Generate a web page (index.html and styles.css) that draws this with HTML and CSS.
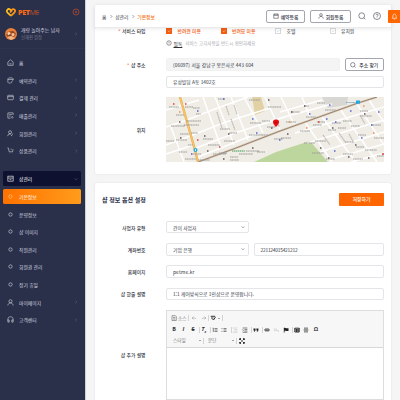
FILE: index.html
```
<!DOCTYPE html>
<html lang="ko">
<head>
<meta charset="utf-8">
<title>PETME 기본정보</title>
<link rel="stylesheet" href="styles.css">
</head>
<body>
<svg class="defs" width="0" height="0">
  <symbol id="right" viewBox="0 0 6 6"><path d="M2.2 1l2 2-2 2"/></symbol>
  <symbol id="down" viewBox="0 0 6 6"><path d="M1 2.2l2 2 2-2"/></symbol>
  <symbol id="dot" viewBox="0 0 8 8"><circle cx="4" cy="4" r="1.9"/></symbol>
  <symbol id="person" viewBox="0 0 8 8"><circle cx="4" cy="2.6" r="1.8"/><path d="M1 7.4c.2-3.8 5.8-3.8 6 0"/></symbol>
  <symbol id="search" viewBox="0 0 8 8"><circle cx="3.7" cy="3.7" r="2.9"/><path d="M5.8 5.8l1.6 1.6"/></symbol>
  <symbol id="check" viewBox="0 0 6 6"><path d="M1.3 3l1.3 1.2 2.2-2.3"/></symbol>
</svg>
<div class="app">
  <aside class="side">
    <div class="brand">
      <svg class="heart" viewBox="0 0 10 9"><path class="h1" d="M5 7.9L1.5 4.6C-.2 2.7 2 0 4.100 1.500L6 3.500"/><path class="h2" d="M4.200 4.600L5.700 1.800C7.700-.3 10.200 2.400 8.500 4.400L5 7.900"/></svg>
      <b>PET</b><span>ME</span>
      <svg class="target" viewBox="0 0 8 8"><circle cx="4" cy="4" r="3"/><circle cx="4" cy="4" r=".7"/></svg>
    </div>
    <div class="user">
      <svg class="avatar" viewBox="0 0 12 12"><circle cx="6" cy="6" r="6" fill="#e7813b"/><path d="M1 7c2-5 8-5 10-1L9 9 6 8 3 10z" fill="#a84c22"/><circle cx="4" cy="5.500" r="1.500" fill="#f6d7b0"/><circle cx="8" cy="6.500" r="1.500" fill="#f3c69a"/><path d="M2 9l4-1 4 2-4 2z" fill="#f0b485"/><circle cx="5" cy="7" r=".7" fill="#402820"/><circle cx="8" cy="4" r=".7" fill="#60352a"/></svg>
      <div class="who"><div>개랑 놀아주는 남자</div><small>신혜련 원장</small></div>
      <svg class="arrow"><use href="#right"/></svg>
    </div>
    <nav class="menu">
      <div class="item"><svg viewBox="0 0 8 8"><path d="M1 3.500L4 .9l3 2.600v3.700H1zM2.800 5.500h2.400"/></svg><span>홈</span></div>
      <div class="item"><svg viewBox="0 0 8 8"><path d="M7 3.500V2L6 1H2L1 2v4l1 1h2M1 2.800h6M4.700 7l.3-1.400L7 3.900"/></svg><span>예약관리</span><svg class="arrow"><use href="#right"/></svg></div>
      <div class="item"><svg viewBox="0 0 8 8"><rect x=".8" y="1.500" width="6.400" height="5" rx=".6"/><path d="M.8 3h6.400"/></svg><span>결제 관리</span><svg class="arrow"><use href="#right"/></svg></div>
      <div class="item"><svg viewBox="0 0 8 8"><path d="M7 3.500V1H1v6h3M2.500 3h3M2.500 4.700h1.500M5 6l1-1 1 1-1 1.200z"/></svg><span>매출관리</span><svg class="arrow"><use href="#right"/></svg></div>
      <div class="item"><svg viewBox="0 0 8 8"><circle cx="3.500" cy="2.500" r="1.700"/><path d="M.8 7c.1-2.500 2.500-2.800 3.500-2.200M5 7l.3-1.300L7 4.200"/></svg><span>회원관리</span><svg class="arrow"><use href="#right"/></svg></div>
      <div class="item"><svg viewBox="0 0 8 8"><path d="M.5 1h1l1 4.500h3.800L7 2.500M3 7h.2M6 7h.2M4 2.500h1.500"/></svg><span>상품관리</span><svg class="arrow"><use href="#right"/></svg></div>
      <div class="item open"><svg viewBox="0 0 8 8"><rect x="1" y="1.300" width="6" height="5.700"/><path d="M1 3.500h6M3 5.300h2"/></svg><span>샵관리</span><svg class="arrow"><use href="#down"/></svg></div>
      <div class="item active"><svg><use href="#dot"/></svg><span>기본정보</span></div>
      <div class="item"><svg><use href="#dot"/></svg><span>운영정보</span></div>
      <div class="item"><svg><use href="#dot"/></svg><span>샵 이미지</span></div>
      <div class="item"><svg><use href="#dot"/></svg><span>직원관리</span></div>
      <div class="item"><svg><use href="#dot"/></svg><span>회원권 관리</span></div>
      <div class="item"><svg><use href="#dot"/></svg><span>정기 휴일</span></div>
      <div class="item"><svg><use href="#person"/></svg><span>마이페이지</span><svg class="arrow"><use href="#right"/></svg></div>
      <div class="item"><svg viewBox="0 0 8 8"><path d="M1 5V3.500c0-3.500 6-3.500 6 0V5M1 4.500h1.500V7H1zM5.500 4.500H7V7H5.500z"/></svg><span>고객센터</span><svg class="arrow"><use href="#right"/></svg></div>
    </nav>
  </aside>

  <main class="main">
    <header class="top">
      <div class="crumbs"><span>홈</span><svg><use href="#right"/></svg><span>샵관리</span><svg><use href="#right"/></svg><b>기본정보</b></div>
      <div class="tools">
        <div class="btn"><svg viewBox="0 0 8 8"><path d="M1 1.500h6v5.500H1zM1 3.200h6M2.500.7v1.500M5.500.7v1.500"/></svg>예약등록</div>
        <div class="btn wide"><svg><use href="#person"/></svg>회원등록</div>
        <svg class="round"><use href="#search"/></svg>
        <svg class="round" viewBox="0 0 8 8"><circle cx="4" cy="4" r="3.500"/><path d="M3 3.200c0-1.500 2.200-1.300 2 0C5 4 4 4 4 4.800M4 5.600v.4"/></svg>
      </div>
      <div class="bell"><svg viewBox="0 0 8 8"><path d="M1.500 6c.8-.8.5-1.800.7-3 .5-2.500 3.100-2.500 3.600 0 .2 1.200-.1 2.200.7 3zM3.300 7.200h1.400"/></svg></div>
    </header>

    <section class="card first">
      <div class="row checks-row">
        <label class="req">서비스 타입</label>
        <div class="checks">
          <div class="chk on"><i><svg><use href="#check"/></svg></i>반려견 미용</div>
          <div class="chk on"><i><svg><use href="#check"/></svg></i>반려묘 미용</div>
          <div class="chk"><i><svg><use href="#check"/></svg></i>호텔</div>
          <div class="chk"><i><svg><use href="#check"/></svg></i>유치원</div>
        </div>
      </div>
      <div class="row info-row">
        <label></label>
        <div class="info"><svg viewBox="0 0 8 8"><circle cx="4" cy="4" r="3"/><path d="M4 2.300v2.200M4 5.300v.5"/></svg><u>필독</u><span>서비스 고지사항을 반드시 확인하세요</span></div>
      </div>
      <div class="row">
        <label class="req">샵 주소</label>
        <div class="pair"><div class="field gray">(06097) 서울 강남구 봉은사로 443 604</div><div class="btn find"><svg><use href="#search"/></svg>주소 찾기</div></div>
      </div>
      <div class="row second"><label></label><div class="field">유성빌딩 A동 1402호</div></div>
      <div class="row map-row">
        <label>위치</label>
        <svg class="map" viewBox="0 0 218 65">
          <rect width="218" height="65" fill="#f0ede7"/>
          <path d="M86 0h9l4 14-10 4z" fill="#e3d1a6"/>
          <path d="M156 0h26l-1 8-19 3z" fill="#d9d7d3"/>
          <path d="M88 65l22-10 34-11 18 21z" fill="#bdd69d"/>
          <g class="streets">
            <path d="M0 30L18 24 49 12 82 0M0 48L24 39 60 25 104 11M30 51L72 35 122 19M32 60L90 37M37 0L55 50M49 0L68 48M65 0L82 43M78 0L97 36M99 0L114 33M0 13L33 3M5 30L18 65M0 57L27 48M115 0L128 27M136 0L144 20M114 15L156 3M100 25L166 7"/>
            <path d="M139 25L166 65M156 20L190 65M174 12L211 65M191 7L218 48M203 3L218 25M129 36L218 10M141 46L218 23M154 55L218 35M166 62L218 47M185 65L218 56M34 64L28 51"/>
          </g>
          <path class="road-edge" d="M32 65L70 51 114 34 192 6 211 0"/>
          <path class="road" d="M32 65L70 51 114 34 192 6 211 0"/>
          <path class="avenue-edge" d="M14 0L29 53 32 65"/>
          <path class="avenue" d="M14 0L29 53 32 65"/>
          <g class="names">
            <path d="M3 10h10M19 10h8M10 18h8M27 11h7M30 17h5M20 24h15M5 29h14M18 28h15M14 37h9M25 36h7M0 44h8M10 43h11M37 42h10M42 48h12M58 44h11M63 36h8M54 32h10M27 57h8M47 57h13M64 60h8M78 57h9M13 55h8M19 62h11M32 63h12M64 63h9M73 57h6M53 56h8M22 48h5M52 2h7M83 3h11M102 10h13M96 24h8M84 26h11M83 38h14M96 38h6M101 30h8M108 42h9M91 55h8M80 54h13M120 25h10M125 15h9M134 34h10M138 9h5M147 28h9M149 44h11M140 20h10M159 13h11M166 26h9M151 25h8M172 31h8M185 29h9M192 38h8M179 45h8M194 14h8M194 19h12M205 28h10M208 41h10M190 50h8M199 53h12M177 57h10M160 62h9M146 56h12M211 59h7M115 41h10M138 46h11M162 33h8M177 24h9M151 6h8M187 62h10"/>
            <path class="slant" d="M51 15l5 16M65 22l4 11M60 9l3 9M157 38l7 10M183 37l5 9M194 18l5 9M68 8l3 9M111 23l2 7M173 36l7 10"/>
          </g>
          <g class="blue"><path d="M31 14h1.500M57 2h1.500M86 22h1.500M90 36h1.500M25 57h1.500M143 17h1.500M160 22h1.500M169 25h1.500M163 8h1.500M184 14h1.500M205 28h1.500M195 41h1.500M168 54h1.500M212 15h1.500M113 43h1.500"/></g>
          <g class="red"><path d="M7 7h1.500M19 7h1.500M31 43h1.500M53 50h1.500M152 25h1.500M216 57h2"/></g>
          <g class="orange"><path d="M13 15h1.500M123 25h1.500M140 31h1.500M197 9h1.500M207 36h1.500"/></g>
          <g class="black"><path d="M13 25h1.500M14 41h1.500M38 39h1.500M62 37h1.500M86 51h1.500M41 54h1.500M105 31h1.500M102 3h1.500M125 15h1.500M138 9h1.500M166 31h1.500M198 17h1.500M154 51h1.500M189 48h1.500M162 61h1.500M182 60h1.500M202 61h1.500M121 37h1.500M57 62h1.500"/></g>
          <path d="M66 54h13" stroke="#79b67d" stroke-width="1.300" stroke-dasharray="1.400 .5"/>
          <circle cx="29.500" cy="53" r="2" fill="#24a8de"/><path d="M29.500 52v2" stroke="#fff" stroke-width=".8"/>
          <rect x="190" y="3.500" width="4" height="3.200" fill="#24a8de"/><path d="M180 5.500h10" stroke="#4b93bd" stroke-dasharray="1 .4"/>
          <path d="M110 30c-5-5-3-7.500 0-7.500s5 2.500 0 7.500" fill="#e60c13"/><circle cx="110" cy="25.500" r=".8" fill="#a70000"/>
        </svg>
      </div>
    </section>

    <section class="card settings">
      <div class="heading"><h2>샵 정보 옵션 설정</h2><div class="save">저장하기</div></div>
      <div class="row"><label>사업자 유형</label><div class="field select">간이 사업자<svg><use href="#down"/></svg></div></div>
      <div class="row"><label>계좌번호</label><div class="pair"><div class="field select">기업 은행<svg><use href="#down"/></svg></div><div class="field grow">221124015421212</div></div></div>
      <div class="row"><label>홈페이지</label><div class="field site">petme.kr</div></div>
      <div class="row"><label>샵 한줄 설명</label><div class="field">1:1 케어방식으로 1인샵으로 운영합니다.</div></div>
      <div class="row editor-row">
        <label>샵 추가 설명</label>
        <div class="editor">
          <div class="bar">
            <div class="line">
              <svg viewBox="0 0 6 6"><path d="M1 .7h3.500l.8.800v4H1zM2 2.500h2.300M2 4h2.300"/></svg><span>소스</span><em></em>
              <svg class="dim" viewBox="0 0 6 6"><path d="M2.500 1.500L1 3l1.500 1.300M1 3h3l1 1"/></svg>
              <svg class="dim undo" viewBox="0 0 6 6"><path d="M3.500 1.500L5 3 3.500 4.300M5 3H2L1 4"/></svg><em class="tight"></em>
              <svg class="bold" viewBox="0 0 6 6"><path d="M.7 1.300h4.500M1 3h2.500M2.500 4l1 1L5.500 2"/></svg><i class="caret"></i><em class="last"></em>
            </div>
            <div class="line icons">
              <b>B</b><b class="it">I</b><b class="strike">S</b><em></em><b class="it">T<sub>x</sub></b><em></em>
              <svg viewBox="0 0 6 6"><path d="M.7 1h.6v4M2.500 1.500h3M2.500 3h3M2.500 4.500h3"/></svg>
              <svg viewBox="0 0 6 6"><path d="M.5 1.500h1M.5 4.300h1M2.500 1.500h3M2.500 3h3M2.500 4.500h3"/></svg><em></em>
              <svg class="pale" viewBox="0 0 6 6"><path d="M.7 1h4.600M2.500 2.500h2.800M2.500 4h2.800M.7 5.300h4.600"/></svg>
              <svg viewBox="0 0 6 6"><path d="M.7 1h4.600M2.500 2.500h2.800M2.500 4h2.800M.7 5.300h4.600M.5 2.300l1 1-1 1"/></svg><em></em>
              <svg class="fill" viewBox="0 0 6 6"><path d="M.5 1.500h2v2l-1 1.300H.8L1.500 3.500h-1zM3.400 1.500h2v2l-1 1.300h-.7l.7-1.300h-1z"/></svg><em></em>
              <svg class="bold" viewBox="0 0 6 6"><rect x=".8" y="2.100" width="4.400" height="1.700" rx=".7"/></svg>
              <svg class="pale" viewBox="0 0 6 6"><path d="M.7 2h2.800v1.600H.7M4 3.500h1.500v1.500"/></svg>
              <svg class="fill" viewBox="0 0 6 6"><path d="M.8.8h.8l1.700.5h2.200v2.600H3.200l-1.600-.5v2.100H.8z"/></svg><em></em>
              <svg class="bold" viewBox="0 0 6 6"><path d="M.8 1.200h4.400M.8 1v4h4.400V1M1 3h4M2.500 2v3M4 2v3"/></svg>
              <svg viewBox="0 0 6 6"><path d="M1 1h4M.5 3h5M1 5h4M1 2h4M1 4h4"/></svg><b>Ω</b>
            </div>
            <div class="line"><span class="pick">스타일<i class="caret"></i></span><em></em><span class="pick para">문단<i class="caret"></i></span><em></em><svg class="bold" viewBox="0 0 6 6"><path d="M.6 2V.6H2M4 .6h1.400V2M5.400 4v1.400H4M2 5.400H.6V4M1 1l1.500 1.500M5 1L3.500 2.500M5 5L3.500 3.500M1 5l1.500-1.500"/></svg></div>
          </div>
          <div class="page"></div>
        </div>
      </div>
    </section>
  </main>
</div>
</body>
</html>
```
FILE: styles.css
```
* { box-sizing: border-box; }
body {
  margin: 0;
  width: 400px;
  height: 400px;
  overflow: hidden;
  font: 4.8px/7px "Noto Sans CJK KR", sans-serif;
  color: #303442;
}
svg { fill: none; stroke: currentColor; stroke-width: .7; flex: none; }
.defs { position: absolute; }
.app { display: flex; height: 400px; }

.side { width: 85px; flex: none; background: #2a3049; color: #d6d8e0; }
.brand { display: flex; align-items: center; height: 24px; padding: 0 5px 0 6px; font: 7.2px/10px "Open Sans", sans-serif; letter-spacing: -.35px; color: #f66918; }
.brand b { font-weight: 800; margin-left: 2px; }
.brand span { font-weight: 300; }
.heart { width: 10px; height: 9px; stroke-width: 1.7; }
.h1 { stroke: #ffbd20; }
.h2 { stroke: #ff9418; }
.target { width: 8px; height: 8px; margin-left: auto; color: #c94d2b; }
.user { display: flex; align-items: center; height: 25px; padding: 1px 7px 6px 5px; margin-bottom: 6px; border-bottom: 1px solid #2d344e; }
.avatar { width: 12px; height: 12px; stroke: none; }
.who { margin-left: 4px; font-size: 4.9px; line-height: 6.5px; white-space: nowrap; }
.who small { display: block; font-size: 4.300px; color: #777d91; }
.arrow { width: 4px; height: 4px; margin-left: auto; color: #737a91; }
.item { display: flex; align-items: center; height: 15px; margin: 0 4px 2.630px 3px; padding: 0 3px 0 4px; border-radius: 1.500px; }
.item > svg:first-child { width: 7px; height: 7px; margin-right: 5px; }
.item.open { background: #0e1130; margin-top: 13.200px; color: #fff; }
.item.active { background: linear-gradient(90deg, #ff7200, #ff9c1c); color: #fff; }
.item.active svg { color: #ffd08d; }

.main { flex: 1; min-width: 0; background: #f5f5f6; border-left: 1px solid #cbd1dd; padding: 5px 9px 0; overflow: hidden; }
.top { position: relative; z-index: 2; display: flex; align-items: center; height: 22px; background: #fff; border-radius: 2px 2px 0 0; padding: 0 10px 0 7px; box-shadow: 0 1px 4px rgba(50, 50, 60, .16); }
.crumbs { display: flex; align-items: center; gap: 2.300px; padding-top: .5px; }
.crumbs svg { width: 4.200px; height: 5px; }
.crumbs b { color: #f47621; font-weight: 500; }
.tools { display: flex; align-items: center; gap: 5px; margin-left: auto; }
.btn { display: flex; align-items: center; justify-content: center; gap: 2px; width: 39px; height: 13px; border: 1px solid #a3a6ae; border-radius: 2px; background: #fff; font-weight: 500; }
.btn svg { width: 6px; height: 6px; }
.btn.wide { width: 41px; margin-right: 1px; }
.round { width: 8px; height: 8px; margin-left: 1px; color: #555963; }
.round + .round { margin-left: 2px; }
.bell { position: absolute; left: 293px; top: 5px; width: 13px; height: 13px; background: #ff6500; color: #fff; border-radius: 1px; padding: 3px; }
.bell svg { display: block; width: 7px; height: 7px; }

.card { background: #fff; border-radius: 2px; padding: 0 7px 0 0; box-shadow: 0 0 2px rgba(40, 40, 60, .13); }
.first { height: 147px; margin-bottom: 9px; }
.row { display: grid; grid-template-columns: 50.500px 218px; column-gap: 20.500px; align-items: center; height: 13px; margin-bottom: 9.300px; }
.row label { text-align: right; font-weight: 500; white-space: nowrap; }
.req::before { content: "*"; color: #f26622; margin-right: 1.500px; }
.checks-row { height: 6px; margin: 0 0 6px; }
.checks { display: grid; grid-template-columns: repeat(4, 54.500px); }
.chk { display: flex; align-items: center; gap: 5.500px; white-space: nowrap; }
.chk i { width: 6px; height: 6px; border: 1px solid #d8dade; color: #bbb; display: flex; }
.chk i svg { width: 4px; height: 4px; }
.chk.on { color: #f4641c; font-weight: 500; }
.chk.on i { background: #f35d12; border-color: #f35d12; color: #fff; }
.info-row { height: 8px; margin-bottom: 11px; }
.info { display: flex; align-items: center; white-space: nowrap; color: #a5a7ad; }
.info svg { width: 6px; height: 6px; color: #444; }
.info u { color: #333; margin: 0 3px 0 1.500px; }
.info span { font-size: 4.500px; }
.second { margin: -5px 0 9px; }
.pair { display: flex; gap: 5px; }
.field { display: flex; align-items: center; width: 218px; height: 12.500px; border: 1px solid #e4e5e8; border-radius: 2px; padding: 0 6px; background: #fff; white-space: nowrap; }
.site { letter-spacing: .15px; }
.gray { width: 173.500px; background: #f4f4f5; border-color: #f1f1f2; letter-spacing: .06px; }
.find { width: 39.500px; gap: 3px; }
.map-row { height: 65px; margin: 0; }
.map { width: 218px; height: 65px; display: block; stroke: none; }
.streets { stroke: #fff; stroke-width: 1.500; }
.road-edge { stroke: #d8cab9; stroke-width: 2; }
.road { stroke: #937c66; stroke-width: .9; }
.avenue-edge { stroke: #e6ae58; stroke-width: 2.400; }
.avenue { stroke: #f7c466; stroke-width: 1.400; }
.names { stroke: #9c9b98; stroke-width: 1.200; stroke-dasharray: 1.300 .4; }
.slant { stroke: #bcb9b5; }
.blue, .red, .orange, .black { stroke-width: 1.500; }
.blue { stroke: #5261d8; }
.red { stroke: #dc403a; }
.orange { stroke: #ee934d; }
.black { stroke: #625659; }

.settings { height: 240px; padding-top: 10px; }
.heading { display: flex; align-items: center; justify-content: space-between; height: 13px; padding-left: 7px; margin-bottom: 14.500px; }
.heading h2 { margin: 0; font-size: 6px; line-height: 9px; font-weight: 700; color: #262c46; }
.save { width: 45px; height: 13px; border-radius: 1px; background: #ff6500; color: #fff; text-align: center; line-height: 12.500px; font-weight: 500; }
.select { width: 82.500px; padding-right: 3px; justify-content: space-between; }
.select svg { width: 4px; height: 4px; }
.grow { width: 130.500px; letter-spacing: -.2px; }
.editor-row { height: 90px; }
.editor { width: 218px; height: 90px; border: 1px solid #dddddf; }
.bar { height: 37px; padding: 2px 4px 0; background: #f7f7f8; border-bottom: 1px solid #d7d7da; color: #777; }
.line { display: flex; align-items: center; height: 11.300px; font-size: 4.600px; }
.line svg { width: 6px; height: 6px; margin-right: 1px; }
.line em { width: 1px; height: 6px; background: #d4d4d6; margin: 0 2px; }
.line .tight { margin: 0 1.500px 0 0; }
.line .dim { color: #aaa; }
.line .undo { margin-left: 2.500px; }
.line .pale { color: #ccc; }
.line .bold { color: #333; stroke-width: 1; }
.line .fill { fill: #222; stroke: none; }
.caret { display: inline-block; border: 1px solid transparent; border-top: 1.300px solid #555; border-bottom: 0; margin-left: 1px; }
.line .last { margin-left: 2px; }
.icons { font-family: "Open Sans", sans-serif; color: #555; }
.icons b { width: 6px; margin-right: 3.500px; font-size: 5.500px; text-align: center; color: #333; }
.line.icons em { margin: 0 .5px 0 -.2px; }
.line.icons svg { margin-right: 3.600px; }
.it { font-style: italic; }
.it sub { font-size: 3px; line-height: 0; }
.strike { text-decoration: line-through; }
.pick { display: flex; align-items: center; justify-content: space-between; width: 30px; padding-left: 2px; }
.pick.para { width: 28px; }
```
